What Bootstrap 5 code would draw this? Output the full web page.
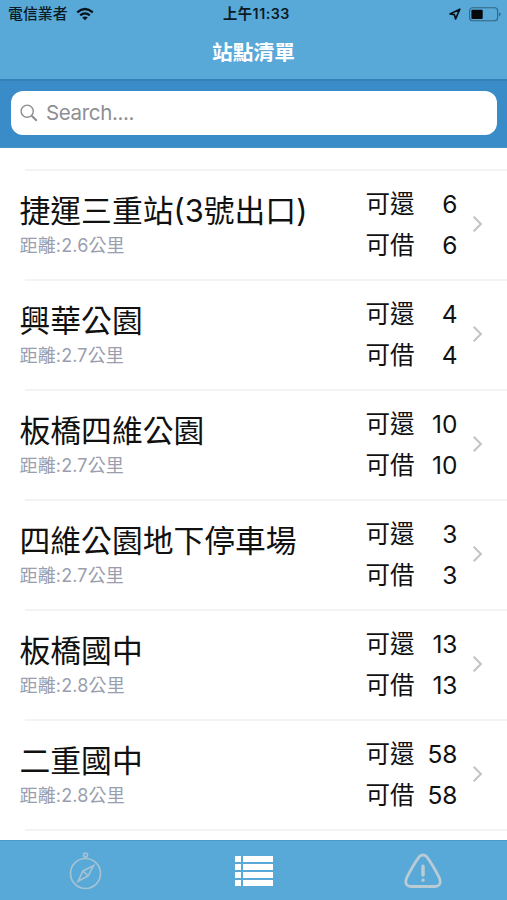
<!DOCTYPE html>
<html lang="zh-Hant">
<head>
<meta charset="utf-8">
<meta name="viewport" content="width=device-width, initial-scale=1">
<title>站點清單</title>
<link href="https://cdn.jsdelivr.net/npm/bootstrap@5.3.0/dist/css/bootstrap.min.css" rel="stylesheet">
<style>
body{font-family:Inter,"Noto Sans CJK TC",sans-serif;color:#111;height:900px}
svg{display:block;flex:none}
.app-head{height:79px;background:#58a8d8}
.status-line{height:28px;padding:0 6px 0 8px;font-size:14px;font-weight:500;line-height:28px;color:#0b1a24}
.status-line .carrier{font-size:14.9px}
.status-line .clock{font-size:14.3px;font-weight:600;letter-spacing:.5px;padding-left:4px}
.app-title{font-size:20.7px;font-weight:600;line-height:30px;margin-top:10px;color:#fff}
.search-zone{height:69px;background:#3a8cc8;border-top:2px solid #3580b8;border-bottom:1px solid #4f94c6;padding:10px 10px 12px 11px}
.search-box{height:44px;border-radius:12px;padding-left:9px;gap:8px}
.search-box input{font-size:20.5px;color:#8e8e93;letter-spacing:-.35px}
.search-box input::placeholder{color:#8e8e93;opacity:1}
.stations{height:692px;padding-top:21px}
.station{height:110px;padding-left:19.5px;padding-right:24px;background:linear-gradient(#f3f3f4,#f3f3f4) 25px 0/100% 2px no-repeat}
.station-name{font-size:30.8px;line-height:40px;margin-top:22px}
.distance{font-size:18px;line-height:24px;margin-top:3px;letter-spacing:.15px;color:#9a9eae}
.counts{width:92px;font-size:24.5px;line-height:41.5px;margin-top:14.5px}
.arrow{margin:46px 0 0 14.5px}
.tabs{height:61px;background:#58a8d8;border-top:1px solid #4b9acb}
</style>
</head>
<body class="d-flex flex-column overflow-hidden bg-white">
<header class="app-head flex-shrink-0">
  <div class="status-line row g-0">
    <div class="col d-flex align-items-center gap-2"><span class="carrier">電信業者</span>
      <svg width="18" height="14" viewBox="0 0 18 14" fill="none" stroke="#07131b" stroke-width="2.3"><path d="M1.2 5.3Q9-1.3 16.8 5.3M4.2 8.4Q9 4.3 13.8 8.4"/><path d="M9 13.2 6.2 10.4Q9 8.4 11.8 10.4Z" fill="#07131b" stroke="none"/></svg>
    </div>
    <div class="col-auto clock">上午11:33</div>
    <div class="col d-flex align-items-center justify-content-end">
      <svg class="me-2" width="12" height="12" viewBox="0 0 12 12" fill="none" stroke="#07131b" stroke-width="1.7" stroke-linejoin="round"><path d="M10.8 1.2 1 6 5.4 6.6 6.6 11Z"/></svg>
      <svg width="32" height="15" viewBox="0 0 32 15"><rect x=".6" y=".8" width="28" height="13" rx="3" fill="none" stroke="#326581" stroke-width="1.1"/><rect x="2.4" y="2.7" width="11.3" height="9.2" rx="1" fill="#05090c"/><path d="M30 5.2q3 2.1 0 4.2z" fill="#326581"/></svg>
    </div>
  </div>
  <h1 class="app-title text-center mb-0">站點清單</h1>
</header>
<div class="search-zone flex-shrink-0">
  <label class="search-box bg-white d-flex align-items-center">
    <svg width="18" height="18" viewBox="0 0 18 18" fill="none" stroke="#8e8e93"><circle cx="7.2" cy="7.2" r="6.1" stroke-width="1.4"/><path d="m11.7 11.7 5 5" stroke-width="2.1"/></svg>
    <input class="border-0 p-0 flex-grow-1 bg-transparent" type="text" placeholder="Search....">
  </label>
</div>
<main class="stations flex-shrink-0 overflow-hidden" id="stations"></main>
<nav class="tabs row g-0 flex-shrink-0">
  <a class="col-4 d-flex justify-content-center" href="#" aria-label="地圖"><svg width="36" height="40" viewBox="0 0 36 40" style="margin-top:10px" fill="none" stroke="#a3c3d3" stroke-width="1.7"><circle cx="18.5" cy="22.5" r="15"/><circle cx="18.5" cy="4" r="2"/><path d="M26.5 14.7 21.2 24.8 11 30.2 16 20ZM16 20l5.2 4.8" stroke-width="1.7"/></svg></a>
  <a class="col-4 d-flex justify-content-center" href="#" aria-label="清單"><svg width="38" height="31" viewBox="0 0 38 31" style="margin-top:15px" fill="#fff"><path d="M0 0h6v6H0zM8 0h30v6H8zM0 8h6v6H0zM8 8h30v6H8zM0 16h6v6H0zM8 16h30v6H8zM0 24h6v6H0zM8 24h30v6H8z"/></svg></a>
  <a class="col-4 d-flex justify-content-center" href="#" aria-label="警告"><svg width="38" height="36" viewBox="0 0 38 36" style="margin-top:12px" fill="none" stroke="#b9cbd4" stroke-width="2.8" stroke-linecap="round"><path d="M15.2 3.8Q19 .2 22.8 3.8 29 12 35.2 24.5 38.4 33 31 33.5H7Q-.4 33 2.8 24.5 9 12 15.2 3.8Z"/><path d="M19 13.2v8.7M19 27.2v.1" stroke-width="3.5"/></svg></a>
</nav>
<script src="https://cdn.jsdelivr.net/npm/bootstrap@5.3.0/dist/js/bootstrap.bundle.min.js"></script>
<script>
const stations=[["捷運三重站(3號出口)","2.6",6],["興華公園","2.7",4],["板橋四維公園","2.7",10],["四維公園地下停車場","2.7",3],["板橋國中","2.8",13],["二重國中","2.8",58],["","",""]];
document.getElementById("stations").innerHTML=stations.map(([name,km,n])=>name?`<article class="station d-flex"><div class="flex-grow-1 text-nowrap"><div class="station-name">${name}</div><div class="distance">距離:${km}公里</div></div><div class="counts"><div class="d-flex justify-content-between"><span>可還</span><span>${n}</span></div><div class="d-flex justify-content-between"><span>可借</span><span>${n}</span></div></div><svg class="arrow" width="11" height="18" viewBox="0 0 11 18" fill="none" stroke="#c4c4c8" stroke-width="2.1"><path d="m1.7 1.8 7.2 7.2-7.2 7.2"/></svg></article>`:`<div class="station"></div>`).join("");
</script>
</body>
</html>
